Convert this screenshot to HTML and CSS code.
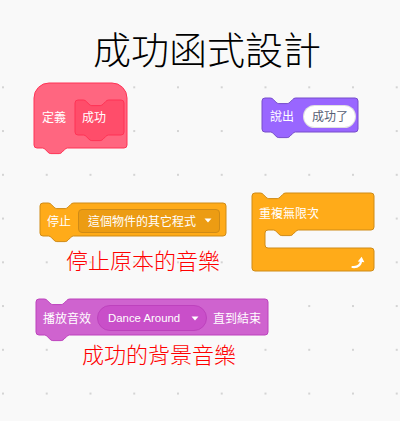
FILE: index.html
```html
<!DOCTYPE html>
<html lang="zh-Hant">
<head>
<meta charset="utf-8">
<title>成功函式設計</title>
<link rel="stylesheet" href="styles.css">
</head>
<body>
<header class="title">成功函式設計</header>
<main class="workspace">

  <div class="block define">
    <svg class="shape" width="93" height="72" viewBox="0 0 93 72"><path class="pink" d="M0,15 A15,15 0 0 1 15,0 H78 A15,15 0 0 1 93,15 V62 A3,3 0 0 1 90,65 H33.6 c-1.4,0 -2.1,0.7 -2.8,1.4 l-2.8,2.8 c-0.7,0.7 -1.4,1.4 -2.8,1.4 h-8.4 c-1.4,0 -2.1,-0.7 -2.8,-1.4 l-2.8,-2.8 c-0.7,-0.7 -1.4,-1.4 -2.8,-1.4 H3 A3,3 0 0 1 0,62 Z"/></svg>
    <span class="label">定義</span>
    <div class="proto">
      <svg class="shape" width="49" height="42" viewBox="0 0 49 42"><path class="pink-dark" d="M0,3 A3,3 0 0 1 3,0 H8.4 c1.4,0 2.1,0.7 2.8,1.4 l2.8,2.8 c0.7,0.7 1.4,1.4 2.8,1.4 h8.4 c1.4,0 2.1,-0.7 2.8,-1.4 l2.8,-2.8 c0.7,-0.7 1.4,-1.4 2.8,-1.4 H46 A3,3 0 0 1 49,3 V32 A3,3 0 0 1 46,35 H33.6 c-1.4,0 -2.1,0.7 -2.8,1.4 l-2.8,2.8 c-0.7,0.7 -1.4,1.4 -2.8,1.4 h-8.4 c-1.4,0 -2.1,-0.7 -2.8,-1.4 l-2.8,-2.8 c-0.7,-0.7 -1.4,-1.4 -2.8,-1.4 H3 A3,3 0 0 1 0,32 Z"/></svg>
      <span class="label">成功</span>
    </div>
  </div>

  <div class="block say">
    <svg class="shape" width="96" height="41" viewBox="0 0 96 41"><path class="looks" d="M0,3 A3,3 0 0 1 3,0 H8.4 c1.4,0 2.1,0.7 2.8,1.4 l2.8,2.8 c0.7,0.7 1.4,1.4 2.8,1.4 h8.4 c1.4,0 2.1,-0.7 2.8,-1.4 l2.8,-2.8 c0.7,-0.7 1.4,-1.4 2.8,-1.4 H93 A3,3 0 0 1 96,3 V31 A3,3 0 0 1 93,34 H33.6 c-1.4,0 -2.1,0.7 -2.8,1.4 l-2.8,2.8 c-0.7,0.7 -1.4,1.4 -2.8,1.4 h-8.4 c-1.4,0 -2.1,-0.7 -2.8,-1.4 l-2.8,-2.8 c-0.7,-0.7 -1.4,-1.4 -2.8,-1.4 H3 A3,3 0 0 1 0,31 Z"/></svg>
    <span class="label">說出</span>
    <span class="text-input">成功了</span>
  </div>

  <div class="block stop">
    <svg class="shape" width="186" height="40" viewBox="0 0 186 40"><path class="control" d="M0,3 A3,3 0 0 1 3,0 H8.4 c1.4,0 2.1,0.7 2.8,1.4 l2.8,2.8 c0.7,0.7 1.4,1.4 2.8,1.4 h8.4 c1.4,0 2.1,-0.7 2.8,-1.4 l2.8,-2.8 c0.7,-0.7 1.4,-1.4 2.8,-1.4 H183 A3,3 0 0 1 186,3 V30 A3,3 0 0 1 183,33 H33.6 c-1.4,0 -2.1,0.7 -2.8,1.4 l-2.8,2.8 c-0.7,0.7 -1.4,1.4 -2.8,1.4 h-8.4 c-1.4,0 -2.1,-0.7 -2.8,-1.4 l-2.8,-2.8 c-0.7,-0.7 -1.4,-1.4 -2.8,-1.4 H3 A3,3 0 0 1 0,30 Z"/></svg>
    <span class="label">停止</span>
    <span class="dropdown">
      <span class="label">這個物件的其它程式</span>
      <svg class="caret" width="8" height="5" viewBox="0 0 8 5"><path d="M0.5,0.5 H7.5 L4,4.5 Z"/></svg>
    </span>
  </div>

  <div class="block forever">
    <svg class="shape" width="122" height="78" viewBox="0 0 122 78"><path class="control" d="M0,3 A3,3 0 0 1 3,0 H8.4 c1.4,0 2.1,0.7 2.8,1.4 l2.8,2.8 c0.7,0.7 1.4,1.4 2.8,1.4 h8.4 c1.4,0 2.1,-0.7 2.8,-1.4 l2.8,-2.8 c0.7,-0.7 1.4,-1.4 2.8,-1.4 H119 A3,3 0 0 1 122,3 V34 A3,3 0 0 1 119,37 H46.6 c-1.4,0 -2.1,0.7 -2.8,1.4 l-2.8,2.8 c-0.7,0.7 -1.4,1.4 -2.8,1.4 h-8.4 c-1.4,0 -2.1,-0.7 -2.8,-1.4 l-2.8,-2.8 c-0.7,-0.7 -1.4,-1.4 -2.8,-1.4 H16 A3,3 0 0 0 13,40 V52 A3,3 0 0 0 16,55 H119 A3,3 0 0 1 122,58 V75 A3,3 0 0 1 119,78 H3 A3,3 0 0 1 0,75 Z"/></svg>
    <div class="arm-top"><span class="label">重複無限次</span></div>
    <div class="mouth"></div>
    <div class="arm-bottom">
      <svg class="repeat-icon" width="14" height="13" viewBox="0 0 14 13"><path class="repeat-line" d="M1.5,11 C6,11.5 9.5,9.5 10.3,4.5"/><path class="repeat-head" d="M6.8,5.6 L10.6,0.8 L13.4,6.3 Z"/></svg>
    </div>
  </div>

  <div class="block sound">
    <svg class="shape" width="232" height="43" viewBox="0 0 232 43"><path class="sound-fill" d="M0,3 A3,3 0 0 1 3,0 H8.4 c1.4,0 2.1,0.7 2.8,1.4 l2.8,2.8 c0.7,0.7 1.4,1.4 2.8,1.4 h8.4 c1.4,0 2.1,-0.7 2.8,-1.4 l2.8,-2.8 c0.7,-0.7 1.4,-1.4 2.8,-1.4 H229 A3,3 0 0 1 232,3 V33 A3,3 0 0 1 229,36 H33.6 c-1.4,0 -2.1,0.7 -2.8,1.4 l-2.8,2.8 c-0.7,0.7 -1.4,1.4 -2.8,1.4 h-8.4 c-1.4,0 -2.1,-0.7 -2.8,-1.4 l-2.8,-2.8 c-0.7,-0.7 -1.4,-1.4 -2.8,-1.4 H3 A3,3 0 0 1 0,33 Z"/></svg>
    <span class="label">播放音效</span>
    <span class="sound-menu">
      <span class="latin">Dance Around</span>
      <svg class="caret" width="8" height="5" viewBox="0 0 8 5"><path d="M0.5,0.5 H7.5 L4,4.5 Z"/></svg>
    </span>
    <span class="label">直到結束</span>
  </div>

  <p class="caption caption-stop">停止原本的音樂</p>
  <p class="caption caption-bg">成功的背景音樂</p>
</main>
</body>
</html>
```

FILE: styles.css
```css
html, body {
  margin: 0;
  padding: 0;
}

body {
  width: 400px;
  height: 421px;
  overflow: hidden;
  background-color: #f9f9f9;
  background-image: radial-gradient(circle, #d4d4d4 0.9px, rgba(212, 212, 212, 0) 1.4px);
  background-size: 43.75px 43.75px;
  background-position: -18.9px 21.7px;
  font-family: "Liberation Sans", "Noto Sans CJK TC", sans-serif;
}

.title {
  height: 70px;
  box-sizing: border-box;
  padding: 29px 0 0 93px;
  background: #f9f9f9;
  color: #000;
  font-family: "Noto Sans CJK TC", sans-serif;
  font-weight: 300;
  font-size: 38px;
  line-height: 38px;
  letter-spacing: 0;
}

.workspace {
  position: relative;
  height: 351px;
}

/* generic block */
.block {
  position: absolute;
  display: flex;
  align-items: center;
  box-sizing: border-box;
  color: #fff;
  font-size: 12px;
  line-height: 1;
}

.block > *:not(.shape) {
  position: relative;
}

.shape {
  position: absolute;
  left: 0;
  top: 0;
  overflow: visible;
}

.shape path {
  stroke-width: 1;
}

.label {
  white-space: nowrap;
  font-family: "Noto Sans CJK TC", sans-serif;
  font-size: 12px;
  line-height: 14px;
}

.pink { fill: #ff6680; stroke: #ff3355; }
.pink-dark { fill: #ff4d6a; stroke: #ff3355; }
.looks { fill: #9966ff; stroke: #774dcb; }
.control { fill: #ffab19; stroke: #cf8b17; }
.sound-fill { fill: #cf63cf; stroke: #bd42bd; }

/* define hat */
.define {
  left: 34px;
  top: 13px;
  width: 93px;
  height: 64px;
  padding: 4px 0 0 8px;
  gap: 9px;
}

.proto {
  position: relative;
  display: flex;
  align-items: center;
  width: 49px;
  height: 35px;
  box-sizing: border-box;
  padding-left: 7px;
}

.proto > .label {
  position: relative;
}

/* say */
.say {
  left: 262px;
  top: 28px;
  width: 96px;
  height: 34px;
  padding: 2px 0 0 8px;
  gap: 9px;
}

.text-input {
  display: flex;
  align-items: center;
  width: 53px;
  height: 23px;
  box-sizing: border-box;
  padding-left: 8px;
  border-radius: 12px;
  background: #fff;
  border: 1px solid rgba(0, 0, 0, 0.12);
  color: #575e75;
  font-family: "Noto Sans CJK TC", sans-serif;
  font-size: 12px;
  line-height: 14px;
}

/* stop */
.stop {
  left: 40px;
  top: 133px;
  width: 186px;
  height: 33px;
  padding: 2px 0 0 7px;
  gap: 7px;
}

.dropdown {
  display: flex;
  align-items: center;
  justify-content: space-between;
  width: 142px;
  height: 24px;
  box-sizing: border-box;
  padding: 0 7px 0 9px;
  border-radius: 4px;
  background: #ec9c13;
  border: 1px solid #cf8b17;
}

.caret {
  display: block;
  flex: none;
}

.caret path {
  fill: #fff;
}

/* forever */
.forever {
  left: 252px;
  top: 123px;
  width: 122px;
  height: 78px;
  flex-direction: column;
  align-items: stretch;
}

.arm-top {
  display: flex;
  align-items: center;
  height: 37px;
  padding: 2px 0 0 7px;
  box-sizing: border-box;
}

.mouth {
  height: 18px;
}

.arm-bottom {
  display: flex;
  align-items: center;
  justify-content: flex-end;
  height: 23px;
  padding: 5px 9px 0 0;
  box-sizing: border-box;
}

.repeat-icon {
  display: block;
}

.repeat-line {
  fill: none;
  stroke: #fff;
  stroke-width: 2.2;
  stroke-linecap: round;
}

.repeat-head {
  fill: #fff;
}

/* sound */
.sound {
  left: 36px;
  top: 229px;
  width: 232px;
  height: 36px;
  padding: 2px 0 0 7px;
  gap: 6px;
}

.sound-menu {
  display: flex;
  align-items: center;
  width: 110px;
  height: 26px;
  box-sizing: border-box;
  padding: 0 7px 0 10px;
  justify-content: space-between;
  border-radius: 13px;
  background: #c94fc9;
  border: 1px solid #bd42bd;
}

.latin {
  font-family: "Liberation Sans", Arial, sans-serif;
  font-size: 11.4px;
  line-height: 13px;
  white-space: nowrap;
}

/* annotations */
.caption {
  position: absolute;
  margin: 0;
  color: #ff0000;
  font-family: "Noto Sans CJK TC", sans-serif;
  font-weight: 300;
  font-size: 22px;
  line-height: 22px;
  white-space: nowrap;
}

.caption-stop {
  left: 66px;
  top: 178px;
}

.caption-bg {
  left: 82px;
  top: 272px;
}
```
